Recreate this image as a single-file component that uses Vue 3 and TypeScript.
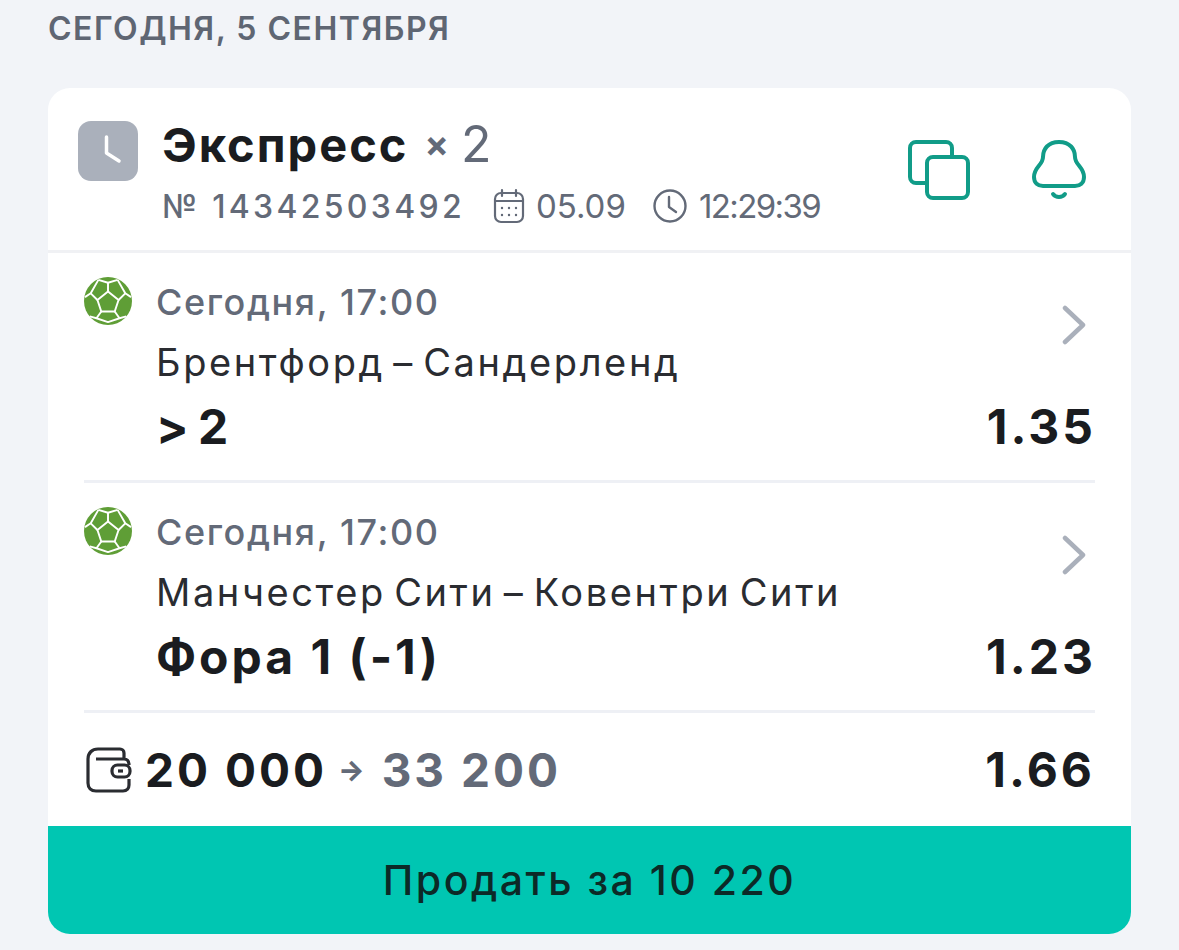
<script setup lang="ts">
interface Bet {
  date: string
  teams: string
  pick: string
  odds: string
}

const bets: Bet[] = [
  { date: 'Сегодня, 17:00', teams: 'Брентфорд – Сандерленд', pick: '> 2', odds: '1.35' },
  { date: 'Сегодня, 17:00', teams: 'Манчестер Сити – Ковентри Сити', pick: 'Фора 1 (-1)', odds: '1.23' }
]
</script>

<template>
  <div class="page">
    <div class="day-title">СЕГОДНЯ, 5 СЕНТЯБРЯ</div>
    <div class="card">
      <div class="card-head">
        <div class="status">
          <svg width="60" height="60" viewBox="0 0 60 60">
            <rect width="60" height="60" rx="13" fill="#aab0bb" />
            <path d="M28.500 16v16l12.500 8" fill="none" stroke="#fff" stroke-width="3.500" stroke-linecap="round" stroke-linejoin="round" />
          </svg>
        </div>
        <div class="head-info">
          <div class="head-title">
            <span class="title-name">Экспресс</span>
            <span class="title-x">×</span>
            <span class="title-count">2</span>
          </div>
          <div class="head-meta">
            <span class="bet-no">№ 14342503492</span>
            <span class="meta-item meta-date">
              <svg width="32" height="36" viewBox="0 0 32 36" fill="none" stroke="#636a78" stroke-width="2.200" stroke-linecap="round">
                <rect x="2" y="5" width="28" height="29" rx="6" />
                <path d="M2 13h28M9 2v6M23 2v6" />
                <path d="M9 20h.01M16 20h.01M23 20h.01M9 27h.01M16 27h.01M23 27h.01" stroke-width="2.400" />
              </svg>
              05.09
            </span>
            <span class="meta-item meta-time">
              <svg width="36" height="36" viewBox="0 0 36 36" fill="none" stroke="#636a78" stroke-width="2.400" stroke-linecap="round" stroke-linejoin="round">
                <circle cx="18" cy="18" r="15.500" />
                <path d="M17 9v10l7 5" />
              </svg>
              12:29:39
            </span>
          </div>
        </div>
        <div class="head-actions">
          <svg width="62" height="60" viewBox="0 0 62 60" fill="none" stroke="#119c88" stroke-width="4" stroke-linejoin="round">
            <path d="M44 17v-9a6 6 0 0 0-6-6H8a6 6 0 0 0-6 6v29a6 6 0 0 0 6 6h10" />
            <rect x="19" y="17" width="41" height="41" rx="6" />
          </svg>
          <svg width="54" height="60" viewBox="0 0 54 60" fill="none" stroke="#119c88" stroke-width="4" stroke-linecap="round">
            <path d="M27 2c-11 0-16 7-16 15 0 8-9 10-9 20 0 6 4 9 9 9h32c5 0 9-3 9-9 0-10-9-12-9-20 0-8-5-15-16-15z" />
            <path d="M21 54c3 4 9 4 12 0" />
          </svg>
        </div>
      </div>

      <div class="bets">
        <div v-for="bet in bets" :key="bet.teams" class="bet">
          <svg class="ball" width="48" height="48" viewBox="0 0 50 50">
            <circle cx="25" cy="25" r="25" fill="#5f9e36" />
            <g fill="none" stroke="#fff" stroke-width="2" stroke-linejoin="round">
              <path d="M25 15l11 9-4 12H18l-4-12z" />
              <path d="M25 15V6M14 24l-7-7M36 24l7-7M18 36l-5 7M32 36l5 7" />
              <path d="M15 3l10 3 10-3M15 3L7 17l-6 4M35 3l8 14 6 4M6 41l7 2 12 4 12-4 7-2" />
            </g>
          </svg>
          <div class="bet-body">
            <div class="bet-top">
              <div class="bet-text">
                <div class="bet-date">{{ bet.date }}</div>
                <div class="bet-teams">{{ bet.teams }}</div>
              </div>
              <svg class="chevron" width="26" height="40" viewBox="0 0 26 40" fill="none" stroke="#aab0bb" stroke-width="4.500" stroke-linecap="round" stroke-linejoin="round">
                <path d="M4 3l18 17L4 37" />
              </svg>
            </div>
            <div class="bet-bottom">
              <span :class="{ 'pick-short': bet.pick.length < 4 }">{{ bet.pick }}</span>
              <span>{{ bet.odds }}</span>
            </div>
          </div>
        </div>
      </div>

      <div class="total">
        <svg width="46" height="46" viewBox="0 0 46 46" fill="none" stroke="#2a2c31" stroke-width="3.200" stroke-linejoin="round">
          <path d="M38 12V6a4 4 0 0 0-4-4H12C6 2 2 6 2 12v24c0 5 3 8 8 8h27c4 0 6-3 6-6v-6M43 18c0-4-2-6-5-6H10" />
          <rect x="26" y="18" width="18" height="12" rx="5.500" />
          <path d="M32 24h5" />
        </svg>
        <span class="stake">20 000</span>
        <span class="arrow">→</span>
        <span class="payout">33 200</span>
        <span class="total-odds">1.66</span>
      </div>

      <button class="sell">Продать за 10 220</button>
    </div>
  </div>
</template>

<style>
body {
  background: #f2f4f8;
}
</style>

<style scoped>
.page {
  height: 950px;
  padding: 0 48px;
  box-sizing: border-box;
  overflow: hidden;
  font-family: Inter, "Liberation Sans", sans-serif;
}

.day-title {
  height: 88px;
  padding-top: 10px;
  box-sizing: border-box;
  font-size: 32px;
  line-height: 38px;
  font-weight: 600;
  color: #5f6673;
  letter-spacing: 1.5px;
}

.card {
  background: #fff;
  border-radius: 22px;
  overflow: hidden;
}

.card-head {
  display: flex;
  height: 165px;
  padding: 33px 45px 0 30px;
  box-sizing: border-box;
  border-bottom: 3px solid #f0f1f4;
}

.status {
  height: 60px;
  margin-right: 24px;
}

.head-info {
  flex: 1;
}

.head-title {
  display: flex;
  align-items: baseline;
  height: 50px;
  line-height: 46px;
}

.title-name {
  font-size: 47px;
  font-weight: 700;
  color: #1a1c20;
  letter-spacing: 2px;
}

.title-x {
  font-size: 36px;
  font-weight: 700;
  color: #636a78;
  margin: 0 12px 0 16px;
  transform: translateY(-5px);
}

.title-count {
  font-size: 50px;
  color: #636a78;
}

.head-meta {
  display: flex;
  align-items: center;
  height: 36px;
  margin-top: 17px;
  color: #636a78;
  font-size: 32px;
}

.bet-no {
  font-weight: 500;
  letter-spacing: 3.3px;
  margin-right: 28px;
}

.meta-item {
  display: flex;
  align-items: center;
  gap: 11px;
  font-size: 33px;
  font-weight: 400;
}

.meta-date {
  margin-right: 26px;
}

.meta-time {
  gap: 11px;
  letter-spacing: -1.6px;
}

.head-actions {
  display: flex;
  gap: 62px;
  padding-top: 19px;
}

.bets {
  padding: 0 36px;
}

.bet {
  display: flex;
  height: 230px;
  padding-top: 24px;
  box-sizing: border-box;
  border-bottom: 3px solid #eef0f5;
}

.ball {
  flex: none;
  margin-right: 24px;
}

.bet-body {
  flex: 1;
}

.bet-top {
  display: flex;
  justify-content: space-between;
  align-items: center;
  height: 122px;
  margin-top: -2px;
}

.bet-text {
  margin-top: -9px;
}

.bet-date {
  font-size: 36px;
  line-height: 50px;
  font-weight: 500;
  color: #636a78;
  letter-spacing: 1.6px;
}

.bet-teams {
  margin-top: 10px;
  font-size: 38px;
  line-height: 50px;
  color: #2a2c31;
  letter-spacing: 2.6px;
  word-spacing: -5px;
}

.chevron {
  margin: -22px 8px 0 0;
}

.bet-bottom {
  display: flex;
  justify-content: space-between;
  height: 60px;
  margin-right: -1px;
  line-height: 60px;
  font-size: 48px;
  font-weight: 700;
  color: #1a1c20;
  letter-spacing: 3px;
}

.pick-short {
  word-spacing: -8px;
}

.total {
  display: flex;
  align-items: center;
  height: 113px;
  padding: 0 36px 0 38px;
  font-size: 46px;
  font-weight: 700;
  color: #1a1c20;
}

.stake {
  margin-left: 13px;
  letter-spacing: 3px;
}

.arrow {
  margin: 0 17px 0 11px;
  font-size: 28px;
  font-weight: 800;
  color: #636a78;
}

.payout {
  color: #636a78;
  letter-spacing: 3px;
}

.total-odds {
  margin-left: auto;
  font-size: 48px;
  letter-spacing: 3px;
}

.sell {
  display: block;
  width: 100%;
  height: 108px;
  border: none;
  background: #00c6b2;
  color: #0c2a27;
  font-family: inherit;
  font-size: 41px;
  font-weight: 500;
  letter-spacing: 2.5px;
}
</style>
